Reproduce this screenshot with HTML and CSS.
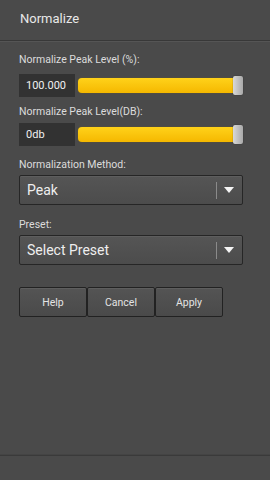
FILE: index.html
```html
<!DOCTYPE html>
<html lang="en">
<head>
    <meta charset="UTF-8">
    <meta name="viewport" content="width=device-width, initial-scale=1.0">
    <title>Normalize</title>
    <link rel="stylesheet" href="styles.css">
</head>
<body>
    <div class="dialog">
        <div class="header">Normalize</div>

        <div class="content">
            <div class="label first">Normalize Peak Level (%):</div>
            <div class="slider-row">
                <div class="value-box">100.000</div>
                <div class="slider">
                    <div class="track"></div>
                    <div class="thumb"></div>
                </div>
            </div>

            <div class="label">Normalize Peak Level(DB):</div>
            <div class="slider-row second">
                <div class="value-box">0db</div>
                <div class="slider">
                    <div class="track"></div>
                    <div class="thumb"></div>
                </div>
            </div>

            <div class="label section">Normalization Method:</div>
            <div class="dropdown">
                <span class="dropdown-text">Peak</span>
                <span class="dropdown-sep"></span>
                <span class="dropdown-arrow"></span>
            </div>

            <div class="label section preset">Preset:</div>
            <div class="dropdown">
                <span class="dropdown-text">Select Preset</span>
                <span class="dropdown-sep"></span>
                <span class="dropdown-arrow"></span>
            </div>

            <div class="buttons">
                <button class="btn">Help</button>
                <button class="btn">Cancel</button>
                <button class="btn">Apply</button>
            </div>
        </div>

        <div class="footer"></div>
    </div>
</body>
</html>
```

FILE: styles.css
```css
/* Page */
body {
    margin: 0;
    padding: 0;
    background: #4a4a4a;
    color: #e6e6e6;
    font-family: Roboto, "Liberation Sans", sans-serif;
    width: 270px;
    height: 480px;
    overflow: hidden;
}

.dialog {
    display: flex;
    flex-direction: column;
    height: 480px;
}

/* Header */
.header {
    height: 40px;
    line-height: 38px;
    padding-left: 20px;
    font-size: 13px;
    color: #e8e8e8;
    border-bottom: 1px solid #383838;
    box-shadow: 0 1px 0 #555;
}

/* Content */
.content {
    flex: 1;
    padding: 0 27px 0 19px;
}

.label {
    font-size: 10.5px;
    line-height: 14px;
    color: #dcdcdc;
    margin-top: 8px;
}

.label.first {
    margin-top: 12px;
}

.label.section {
    margin-top: 12px;
}

.label.preset {
    margin-top: 13px;
}

/* Slider rows */
.slider-row {
    display: flex;
    align-items: center;
    gap: 3px;
    margin-top: 7px;
}

.slider-row.second {
    margin-top: 4px;
}

.value-box {
    width: 49px;
    height: 23px;
    line-height: 23px;
    padding-left: 7px;
    background: #323232;
    font-size: 11px;
    color: #f0f0f0;
}

.slider {
    flex: 1;
    display: flex;
    align-items: center;
    height: 23px;
}

.track {
    flex: 1;
    height: 15px;
    border-radius: 4px 0 0 4px;
    background: linear-gradient(#ffd21a, #f5b800);
    box-shadow: 0 0 1px #8a6d00;
}

.thumb {
    width: 10px;
    height: 19px;
    border-radius: 2px;
    background: linear-gradient(90deg, #d8d8d8, #a9a9a9);
    box-shadow: 0 0 1px #222;
}

/* Dropdowns */
.dropdown {
    display: flex;
    align-items: center;
    height: 28px;
    margin-top: 3px;
    border: 1px solid #262626;
    border-radius: 2px;
    background: linear-gradient(#555, #4c4c4c);
    box-shadow: inset 0 1px 0 #5e5e5e;
}

.dropdown-text {
    flex: 1;
    padding-left: 7px;
    font-size: 14px;
    color: #eeeeee;
}

.dropdown-sep {
    width: 1px;
    height: 17px;
    background: #8a8a8a;
    margin-right: 7px;
}

.dropdown-arrow {
    width: 0;
    height: 0;
    border-left: 5px solid transparent;
    border-right: 5px solid transparent;
    border-top: 6px solid #f4f4f4;
    margin-right: 8px;
}

/* Buttons */
.buttons {
    display: flex;
    margin-top: 22px;
}

.btn {
    width: 68px;
    height: 30px;
    margin: 0;
    border: 1px solid #222;
    border-radius: 2px;
    background: linear-gradient(#545454, #4a4a4a);
    box-shadow: inset 0 1px 0 #5e5e5e;
    color: #e4e4e4;
    font-family: Roboto, "Liberation Sans", sans-serif;
    font-size: 10.5px;
    padding: 0;
}

/* Footer */
.footer {
    height: 24px;
    border-top: 1px solid #3a3a3a;
    box-shadow: 0 -1px 0 #444;
}
```
